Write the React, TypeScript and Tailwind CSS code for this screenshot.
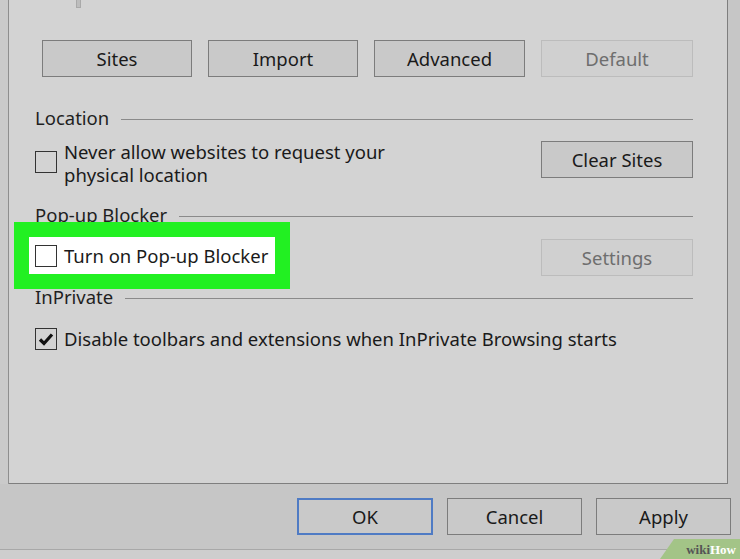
import React from "react";

const Btn = ({
  label,
  disabled,
  primary,
  className = "",
}: {
  label: string;
  disabled?: boolean;
  primary?: boolean;
  className?: string;
}) => (
  <div
    className={`h-[37px] flex items-center justify-center text-[18.5px] border ${
      disabled
        ? "bg-[#d0d0d0] border-[#bcbcbc] text-[#6e6e6e]"
        : primary
        ? "bg-[#c9c9c9] border-[#4f7bc4] border-2 text-[#1a1a1a]"
        : "bg-[#c9c9c9] border-[#7c7c7c] text-[#1a1a1a]"
    } ${className}`}
  >
    {label}
  </div>
);

const Box = ({ checked, white }: { checked?: boolean; white?: boolean }) => (
  <div
    className={`w-[22px] h-[22px] shrink-0 border-[1.5px] border-[#333] flex items-center justify-center ${
      white ? "bg-white" : "bg-transparent"
    }`}
  >
    {checked && (
      <svg width="18" height="18" viewBox="0 0 18 18">
        <path d="M3 9.5 L7 13.5 L15 4.5" fill="none" stroke="#111" strokeWidth="3.2" />
      </svg>
    )}
  </div>
);

const Header = ({ title, className = "" }: { title: string; className?: string }) => (
  <div className={`h-[22px] flex items-center pr-[34px] ${className}`}>
    <span className="text-[18.5px] text-[#1f1f1f] leading-none">{title}</span>
    <div className="flex-1 h-px bg-[#8a8a8a] ml-[12px] mt-[3px]" />
  </div>
);

export default function App() {
  return (
    <div className="relative w-[740px] h-[559px] overflow-hidden bg-[#c6c6c6] flex flex-col font-['Noto_Sans',sans-serif]">
      <div className="flex h-[484px]">
        <div className="w-[9px] bg-[#cacaca] border-r border-[#8e8e8e]" />
        <div className="w-[719px] bg-[#d3d3d3] border-r border-b border-[#7e7e7e] flex flex-col">
          <div className="ml-[67px] w-[5px] h-[8px] bg-[#bdbdbd] border border-[#a9a9a9] border-t-0" />

          <div className="mt-[32px] ml-[33px] flex gap-[16px]">
            <Btn label="Sites" className="w-[150px]" />
            <Btn label="Import" className="w-[150px]" />
            <Btn label="Advanced" className="w-[151px]" />
            <Btn label="Default" disabled className="w-[152px]" />
          </div>

          <Header title="Location" className="mt-[30px] pl-[26px]" />

          <div className="mt-[11px] pl-[26px] pr-[34px] flex items-start justify-between">
            <div className="flex items-start gap-[7px]">
              <div className="mt-[11px]">
                <Box />
              </div>
              <div className="text-[18.5px] leading-[23px] text-[#1a1a1a]">
                Never allow websites to request your
                <br />
                physical location
              </div>
            </div>
            <Btn label="Clear Sites" className="w-[152px] mt-px" />
          </div>

          <Header title="Pop-up Blocker" className="mt-[18px] pl-[26px]" />

          <div className="mt-[-4px] pl-[5px] pr-[34px] flex items-start justify-between">
            <div className="bg-[#22f022] p-[15px] w-[276px]">
              <div className="bg-white h-[37px] flex items-center pl-[6px] gap-[7px]">
                <Box white />
                <span className="text-[18.5px] text-[#1a1a1a]">Turn on Pop-up Blocker</span>
              </div>
            </div>
            <Btn label="Settings" disabled className="w-[152px] mt-[17px]" />
          </div>

          <Header title="InPrivate" className="mt-[-3px] pl-[26px]" />

          <div className="mt-[17px] pl-[26px] flex items-center gap-[7px]">
            <Box checked />
            <span className="text-[18.5px] text-[#1a1a1a]">
              Disable toolbars and extensions when InPrivate Browsing starts
            </span>
          </div>
        </div>
      </div>

      <div className="h-[65px] flex items-start pt-[14px] pl-[297px] gap-[14px]">
        <Btn label="OK" primary className="w-[136px]" />
        <Btn label="Cancel" className="w-[135px]" />
        <Btn label="Apply" className="w-[135px]" />
      </div>
      <div className="flex-1 border-t border-[#a8a8a8] bg-[#cecece]" />

      <div className="absolute right-0 bottom-0 w-[80px] h-[20px]">
        <svg className="absolute inset-0" width="80" height="20" viewBox="0 0 80 20">
          <polygon points="14,0 80,0 80,20 0,20" fill="#a3c487" />
        </svg>
        <div className="absolute inset-0 flex items-center justify-end pr-[4px] text-[13px] font-bold font-['Liberation_Serif',serif] leading-none">
          <span className="text-[#555]">wiki</span>
          <span className="text-white">How</span>
        </div>
      </div>
    </div>
  );
}
